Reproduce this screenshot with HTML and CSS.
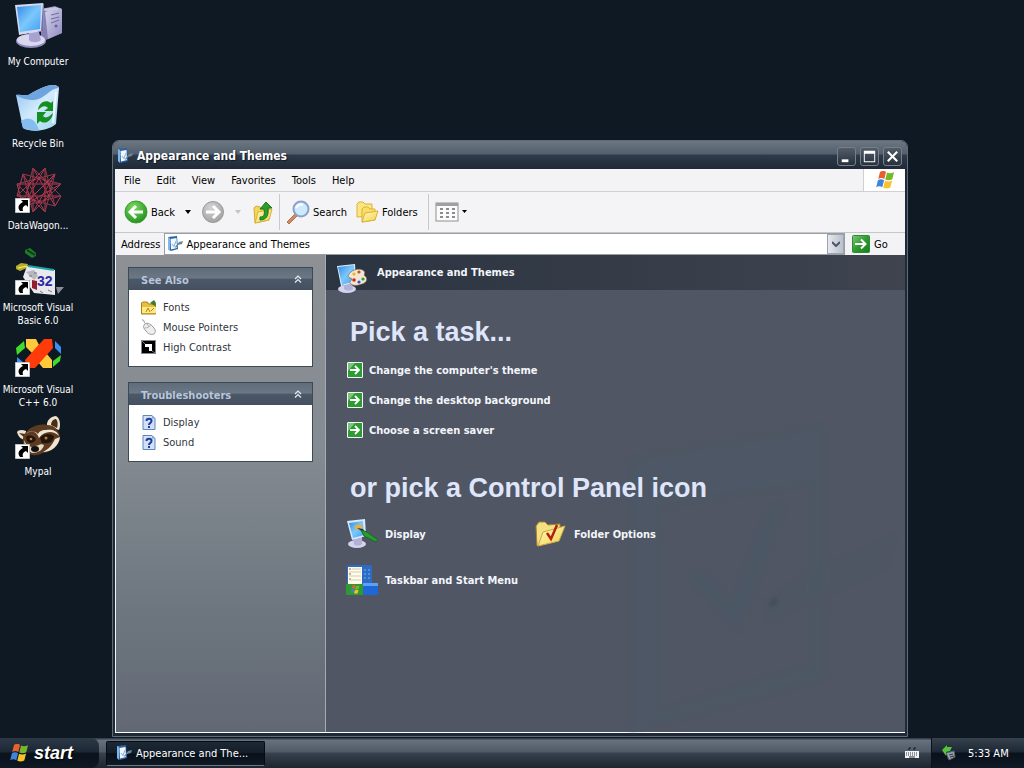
FILE: index.html
```html
<!DOCTYPE html>
<html lang="en">
<head>
    <meta charset="UTF-8">
    <meta name="viewport" content="width=device-width, initial-scale=1.0">
    <title>Appearance and Themes</title>
    <link rel="stylesheet" href="styles.css">
</head>
<body>
    <!-- Shared icons -->
    <svg class="defs" aria-hidden="true">
        <defs>
            <linearGradient id="gScreen" x1="0" y1="0" x2="1" y2="1">
                <stop offset="0" stop-color="#3288e6"/>
                <stop offset="0.5" stop-color="#7cc8fb"/>
                <stop offset="1" stop-color="#3f9ff5"/>
            </linearGradient>
            <linearGradient id="gCase" x1="0" y1="0" x2="1" y2="1">
                <stop offset="0" stop-color="#d6d3ec"/>
                <stop offset="1" stop-color="#8f8bbf"/>
            </linearGradient>
            <linearGradient id="gBin" x1="0" y1="0" x2="1" y2="1">
                <stop offset="0" stop-color="#8fc0f2"/>
                <stop offset="0.5" stop-color="#d3ebfc"/>
                <stop offset="1" stop-color="#9fd6ee"/>
            </linearGradient>
            <linearGradient id="gGreen" x1="0" y1="0" x2="1" y2="1">
                <stop offset="0" stop-color="#7cc877"/>
                <stop offset="0.5" stop-color="#2f9a30"/>
                <stop offset="1" stop-color="#15801a"/>
            </linearGradient>
            <linearGradient id="gFolder" x1="0" y1="0" x2="1" y2="1">
                <stop offset="0" stop-color="#fffbb4"/>
                <stop offset="1" stop-color="#f3d050"/>
            </linearGradient>
            <radialGradient id="gBall" cx="0.4" cy="0.3" r="0.75">
                <stop offset="0" stop-color="#7ddb60"/>
                <stop offset="1" stop-color="#1f8f1b"/>
            </radialGradient>
            <radialGradient id="gBallOff" cx="0.4" cy="0.3" r="0.75">
                <stop offset="0" stop-color="#d4d4d4"/>
                <stop offset="1" stop-color="#a0a0a0"/>
            </radialGradient>
        </defs>
        <symbol id="shortcut" viewBox="0 0 15 15">
            <rect width="15" height="15" fill="#fff" stroke="#8a8a8a"/>
            <path d="M6 2h7v7l-2-2c-3 1-4 3-3 6H5C2 9 4 6 8 4z" fill="#000"/>
        </symbol>
        <symbol id="flag" viewBox="0 0 20 18">
            <path d="M5 1c2-1.500 4.500-1.500 6 0L9.300 8c-2-1.200-4-1.200-6.100 0z" fill="#e8602c"/>
            <path d="M12 1.500c2 1 4 1 7-.3L17.300 8.200c-2.500 1.200-4.700 1.200-7 .3z" fill="#76b82a"/>
            <path d="M2.900 9.200c2-1.200 4-1.200 6.200 0l-1.800 7c-2-1.300-4-1.300-6.100 0z" fill="#3f83dc"/>
            <path d="M10 9.700c2.300 1 4.700 1 7.100-.2l-1.800 7c-2.400 1.200-4.700 1.200-7 .2z" fill="#f8c22a"/>
        </symbol>
        <symbol id="theme" viewBox="0 0 16 16">
            <path d="M1 1l9-1 1 13-7 2-3-2z" fill="#2a62a4"/>
            <path d="M1 1l2 1V15l-2-2z" fill="#7db8ec"/>
            <path d="M3.500 3l6-1 .5 10-6 1.500z" fill="#f5f9ff"/>
            <path d="M5 8l2 2.500L9 5" fill="none" stroke="#8fbde8" stroke-width="1.200"/>
            <path d="M8 11l4-5 4-1-1 3-4 1-2 3z" fill="#64879c"/>
        </symbol>
        <symbol id="go" viewBox="0 0 18 18">
            <rect x="0.500" y="0.500" width="17" height="17" rx="1" fill="url(#gGreen)" stroke="#2d8a36"/>
            <path d="M3 9h10M9 4.500L13.500 9 9 13.500" fill="none" stroke="#fff" stroke-width="2"/>
        </symbol>
        <symbol id="task" viewBox="0 0 16 16">
            <rect x="0.500" y="0.500" width="15" height="15" rx="0.500" fill="#2d9a34" stroke="#f4fff4"/>
            <path d="M1 1h7L1 9z" fill="#7cc57c"/>
            <path d="M3 8h9M8 4l4 4-4 4" fill="none" stroke="#fff" stroke-width="1.800"/>
        </symbol>
        <symbol id="chevrons" viewBox="0 0 8 8">
            <path d="M1 4l3-3 3 3M1 7.500l3-3 3 3" fill="none" stroke="#e4ebf5" stroke-width="1.200"/>
        </symbol>
        <symbol id="help" viewBox="0 0 14 16">
            <path d="M1 1.500h9l3 3v11H1z" fill="#cfe0f8" stroke="#5f86bd"/>
            <path d="M10 1.500v3h3z" fill="#7fa4d6"/>
            <path d="M4.500 7c0-3 5-3 5 0 0 2-2.500 2-2.500 4M7 12v2" fill="none" stroke="#1c3f9c" stroke-width="2"/>
        </symbol>
    </svg>

    <main class="desktop">
        <nav class="shortcuts">
            <a class="shortcut" href="#">
                <svg class="shortcut-icon" viewBox="0 0 48 48">
                    <path d="M27 7l14-3 7 3v24l-16 7-5-4z" fill="#8480b4"/>
                    <path d="M27 7l14-2 7 2-14 3z" fill="#c9c6e4"/>
                    <path d="M31 10l17-3v24l-14 6z" fill="url(#gCase)"/>
                    <path d="M37 13l8-2M37 17l8-2M37 21l8-3" stroke="#6f6ba5"/>
                    <circle cx="42" cy="24" r="1.500" fill="#6662a0"/>
                    <ellipse cx="17" cy="39" rx="15" ry="7" fill="#8e8abc"/>
                    <ellipse cx="17" cy="38" rx="14" ry="6" fill="#dad8ef"/>
                    <path d="M15 30h10l2 8c-3 3-10 3-12 0z" fill="#a7a3d0"/>
                    <path d="M1 3l28-2 1 3-1 25-24 4z" fill="#d4d8f0"/>
                    <path d="M29 1l1 2-1 26-2 0z" fill="#6f74a4"/>
                    <path d="M3 5l24-2-1 24-20 3z" fill="url(#gScreen)"/>
                </svg>
                <span>My Computer</span>
            </a>
            <a class="shortcut" href="#">
                <svg class="shortcut-icon" viewBox="0 0 48 48">
                    <path d="M2 11c5-1 10 2 14-1C22 6 33 1 39 1c4 0 6 2 6 3l-3 36c-8 7-25 9-33 4z" fill="url(#gBin)"/>
                    <path d="M2 11c5-1 10 2 14-1C22 6 33 1 39 1c3 0 5 1 6 3-9 0-14 11-25 12-7 0-14-2-18-5z" fill="#6ea5de"/>
                    <path d="M7 37c7-5 14-3 18 9-6 1-12 0-16-2z" fill="#86bdf0"/>
                    <path d="M42 8l-3 31" stroke="#ecfaff" stroke-width="2"/>
                    <path d="M24 26c1-8 8-11 13-7l2-2v10H30l4-3c-3-3-6-2-10 2z" fill="#159020"/>
                    <path d="M39 29c-1 8-8 12-13 8l-3 3V28h9l-3 4c3 3 6 1 10-3z" fill="#159020"/>
                </svg>
                <span>Recycle Bin</span>
            </a>
            <a class="shortcut" href="#">
                <svg class="shortcut-icon" viewBox="0 0 48 48">
                    <g fill="none" stroke="#b83c50" transform="translate(25 24)">
                        <path d="M22 6L-22 6-16 -16 6 22 6-22-16 16-22-6 22-6-16 16 16-16-6 22-6-22 16 16z"/>
                        <path d="M22 6L-16 16-6-22zM16 16L-22 6 6-22zM6 22L-22-6 16-16zM-6 22L-16-16 22-6z" stroke="#96364a"/>
                        <circle r="11" stroke-dasharray="3 2"/>
                        <circle r="7" stroke="#7d2335"/>
                    </g>
                    <use href="#shortcut" x="1" y="32" width="15" height="15"/>
                </svg>
                <span>DataWagon...</span>
            </a>
            <a class="shortcut" href="#">
                <svg class="shortcut-icon" viewBox="0 0 48 48">
                    <path d="M11 2l5-2 6 5v3l-4 2-7-5z" fill="#1f7a2d"/>
                    <path d="M13 2l8 5" stroke="#0c3d14" stroke-width="2"/>
                    <path d="M2 18l5-3 7 1-1 4-7 3-4-2z" fill="#b5ad2a"/>
                    <path d="M4 20l9-2" stroke="#fff27a"/>
                    <path d="M13 18l28 4v25l-21-2-11-16z" fill="#e8e8ee"/>
                    <path d="M14 18l26 4" stroke="#16a6a6" stroke-width="2"/>
                    <path d="M12 24l8-2 4 6-4 4z" fill="#b7b7bf"/>
                    <path d="M18 32l5 1v9l-5-2z" fill="#951d2c"/>
                    <path d="M26 43l3 2M34 42l4 2M20 25h3M15 28h3" stroke="#777"/>
                    <text class="badge-32" x="23" y="38">32</text>
                    <path d="M42 39h8l-6 7z" fill="#8b8f96"/>
                    <use href="#shortcut" x="1" y="32" width="15" height="15"/>
                </svg>
                <span>Microsoft Visual<br>Basic 6.0</span>
            </a>
            <a class="shortcut" href="#">
                <svg class="shortcut-icon" viewBox="0 0 48 48">
                    <path d="M10 11l1 7-8 7-1-7z" fill="#3fdc2c"/>
                    <path d="M3 27l7 6v4l-7-5z" fill="#3c8ff0"/>
                    <path d="M12 9h10l3 6-7 8-6-6z" fill="#ffc93c"/>
                    <path d="M32 23l6 7v8h-9l-5-6z" fill="#ffc93c"/>
                    <path d="M41 11l6 6v7l-6-6z" fill="#3c8ff0"/>
                    <path d="M47 25l-1 6-7 6v-6z" fill="#3fdc2c"/>
                    <path d="M30 9h8l1 9-18 20h-8l-2-8z" fill="#ff3b0a"/>
                    <use href="#shortcut" x="1" y="32" width="15" height="15"/>
                </svg>
                <span>Microsoft Visual<br>C++ 6.0</span>
            </a>
            <a class="shortcut" href="#">
                <svg class="shortcut-icon" viewBox="0 0 48 48">
                    <path d="M33 14c-1-6 5-10 9-10 4 2 5 9 3 14z" fill="#ece2cf"/>
                    <path d="M37 13c0-4 3-6 5-6 2 2 2 6 1 9z" fill="#4a2c17"/>
                    <path d="M12 19c-4-2-8-1-9 1 1 5 5 8 9 8z" fill="#ece2cf"/>
                    <path d="M5 21l6 1v4z" fill="#4a2c17"/>
                    <path d="M9 26c2-9 14-15 24-13 8 0 13 6 13 13-1 8-9 14-17 15-6 3-12 3-14 0-4-4-7-9-6-15z" fill="#5d3b20"/>
                    <path d="M12 22c6-5 11-2 13 4 5-7 14-8 20-2-2-6-8-7-13-6-5 0-7 2-8 4-3-3-8-4-12 0z" fill="#efe6d6"/>
                    <path d="M46 25c-1 9-9 15-17 15 6-3 9-7 12-13z" fill="#efe6d6"/>
                    <path d="M10 28c2 4 3 6 8 7 8-2 9-4 12-2-1 5-6 8-12 8-4-2-8-7-8-13z" fill="#e6dac6"/>
                    <path d="M26 26c4-5 10-5 14-2-1 7-6 8-12 7z" fill="#24150b"/>
                    <path d="M12 25c4-3 8-1 10 2-2 5-7 5-9 2z" fill="#24150b"/>
                    <circle cx="32" cy="26" r="1.500" fill="#b2824d"/>
                    <circle cx="17" cy="27" r="1.300" fill="#b2824d"/>
                    <ellipse cx="21" cy="37" rx="4" ry="3" fill="#111"/>
                    <use href="#shortcut" x="1" y="32" width="15" height="15"/>
                </svg>
                <span>Mypal</span>
            </a>
        </nav>

        <section class="window">
            <header class="titlebar">
                <svg class="icon-16" viewBox="0 0 16 16"><use href="#theme"/></svg>
                <h1>Appearance and Themes</h1>
                <div class="controls">
                    <button type="button" aria-label="Minimize">
                        <svg viewBox="0 0 18 18"><path d="M4 12h7v3H4z" fill="#fff"/></svg>
                    </button>
                    <button type="button" aria-label="Maximize">
                        <svg viewBox="0 0 18 18"><path d="M3 3h12v12H3zM4 6v8h10V6z" fill="#fff" fill-rule="evenodd"/></svg>
                    </button>
                    <button type="button" aria-label="Close">
                        <svg viewBox="0 0 18 18"><path d="M4 4l10 10M14 4L4 14" stroke="#fff" stroke-width="2.200"/></svg>
                    </button>
                </div>
            </header>

            <div class="menubar">
                <button type="button">File</button>
                <button type="button">Edit</button>
                <button type="button">View</button>
                <button type="button">Favorites</button>
                <button type="button">Tools</button>
                <button type="button">Help</button>
                <div class="brand"><svg viewBox="0 0 20 18"><use href="#flag"/></svg></div>
            </div>

            <div class="toolbar">
                <div class="group">
                    <button type="button" class="tool">
                        <svg class="icon-24" viewBox="0 0 24 24">
                            <circle cx="12" cy="12" r="11" fill="url(#gBall)" stroke="#3d9a35"/>
                            <path d="M19 12H7M12 6l-6 6 6 6" fill="none" stroke="#fff" stroke-width="3"/>
                        </svg>
                        Back
                    </button>
                    <button type="button" class="drop" aria-label="Back history">
                        <svg viewBox="0 0 6 4"><path d="M0 0h6L3 4z" fill="#000"/></svg>
                    </button>
                    <button type="button" class="tool" aria-label="Forward">
                        <svg class="icon-24" viewBox="0 0 24 24">
                            <circle cx="12" cy="12" r="10.500" fill="url(#gBallOff)" stroke="#9a9a9a"/>
                            <path d="M5 12h12M12 6l6 6-6 6" fill="none" stroke="#fff" stroke-width="3"/>
                        </svg>
                    </button>
                    <button type="button" class="drop" aria-label="Forward history">
                        <svg viewBox="0 0 6 4"><path d="M0 0h6L3 4z" fill="#c4c4c4"/></svg>
                    </button>
                    <button type="button" class="tool" aria-label="Up">
                        <svg class="icon-24" viewBox="0 0 24 24">
                            <path d="M3 8l2-2 4 1 1 2 8-1v12L4 23z" fill="#f3d75c" stroke="#d3aa35"/>
                            <path d="M4 23l3-11 14-3-3 11z" fill="url(#gFolder)" stroke="#d8b23c"/>
                            <path d="M9 17c4 0 5-2 4-8H9l6-7 6 6h-4c1 8-2 12-8 12z" fill="#2c9c2a" stroke="#1b761c"/>
                        </svg>
                    </button>
                </div>
                <div class="group labelled">
                    <button type="button" class="tool">
                        <svg class="icon-24" viewBox="0 0 24 24">
                            <path d="M1 22l8-8 2 2-8 8z" fill="#d08a60" stroke="#b5744f"/>
                            <circle cx="15" cy="9" r="7.500" fill="#cdeaff" stroke="#8aa2cc" stroke-width="2"/>
                            <path d="M10 8c1-3 4-4 7-3" fill="none" stroke="#fff" stroke-width="2"/>
                        </svg>
                        Search
                    </button>
                    <button type="button" class="tool">
                        <svg class="icon-24" viewBox="0 0 24 24">
                            <path d="M2 17V4l2-2h4l2 2h7v12z" fill="#fbe680" stroke="#dcb13a"/>
                            <path d="M7 22V9l2-2h4l2 2h5v11z" fill="#f9de68" stroke="#dcb13a"/>
                            <path d="M7 22l3-9 13-2-3 9z" fill="url(#gFolder)" stroke="#dcb13a"/>
                        </svg>
                        Folders
                    </button>
                </div>
                <div class="group">
                    <button type="button" class="tool" aria-label="Views">
                        <svg class="icon-24" viewBox="0 0 24 24">
                            <rect x="1" y="3" width="22" height="18" fill="#fbfbfb" stroke="#8f8f8f"/>
                            <path d="M1 4.500h22" stroke="#a0a0a0" stroke-width="3"/>
                            <path d="M5 9h3M11 9h3M17 9h3M5 13h3M11 13h3M17 13h3M5 17h3M11 17h3M17 17h3" stroke="#8c8c8c" stroke-width="2"/>
                        </svg>
                        <svg class="caret" viewBox="0 0 6 4"><path d="M0 0h5L2.500 3z" fill="#000"/></svg>
                    </button>
                </div>
            </div>

            <div class="addressbar">
                <label for="address">Address</label>
                <div class="field">
                    <svg class="icon-16" viewBox="0 0 16 16"><use href="#theme"/></svg>
                    <input type="text" id="address" value="Appearance and Themes">
                    <button type="button" aria-label="Show addresses">
                        <svg viewBox="0 0 8 6"><path d="M0 1l4 4 4-4" fill="none" stroke="#4a5568" stroke-width="2"/></svg>
                    </button>
                </div>
                <button type="button" class="go">
                    <svg viewBox="0 0 18 18"><use href="#go"/></svg>
                    Go
                </button>
            </div>

            <div class="content">
                <aside class="sidebar">
                    <section class="panel">
                        <h2>See Also <svg viewBox="0 0 8 8"><use href="#chevrons"/></svg></h2>
                        <ul>
                            <li><a href="#">
                                <svg class="icon-16" viewBox="0 0 16 16">
                                    <path d="M.5 15V4l1-1h5l1 2h7v10z" fill="#e7bf3a" stroke="#a7801c"/>
                                    <path d="M1 14V8h14v6z" fill="#fbe98a"/>
                                    <path d="M5 13l2-4 2 4M10 12l3-3" stroke="#b38415" fill="none"/>
                                    <path d="M9 4l4-3 2 3-1 3z" fill="#3d7a32"/>
                                </svg>
                                Fonts
                            </a></li>
                            <li><a href="#">
                                <svg class="icon-16" viewBox="0 0 16 16">
                                    <path d="M1 1c3-1 1 4 5 4" fill="none" stroke="#8c8c8c"/>
                                    <path d="M3 6c2-3 6-2 9 2 3 3 3 5 1 7-3 1-6 0-8-3-2-2-3-4-2-6z" fill="#efeeee" stroke="#9b9898"/>
                                    <path d="M4 9c2 0 5-1 6-4M6 5l2 3" fill="none" stroke="#b1aeae"/>
                                </svg>
                                Mouse Pointers
                            </a></li>
                            <li><a href="#">
                                <svg class="icon-16" viewBox="0 0 16 16">
                                    <rect x="0.500" y="1.500" width="14" height="13" fill="#000" stroke="#8a8a8a"/>
                                    <path d="M4 5h7v7H8V8H4z" fill="#fff"/>
                                    <path d="M1 2l3 3M11 12l3 2" stroke="#777"/>
                                </svg>
                                High Contrast
                            </a></li>
                        </ul>
                    </section>
                    <section class="panel">
                        <h2>Troubleshooters <svg viewBox="0 0 8 8"><use href="#chevrons"/></svg></h2>
                        <ul>
                            <li><a href="#"><svg class="icon-16" viewBox="0 0 14 16"><use href="#help"/></svg>Display</a></li>
                            <li><a href="#"><svg class="icon-16" viewBox="0 0 14 16"><use href="#help"/></svg>Sound</a></li>
                        </ul>
                    </section>
                </aside>

                <article class="category">
                    <div class="category-head">
                        <svg viewBox="0 0 32 32">
                            <ellipse cx="11" cy="27" rx="9" ry="4" fill="#d5d3ee"/>
                            <path d="M8 20h8l1 7c-2 2-7 2-9 0z" fill="#b3b1d8"/>
                            <path d="M1 4l18-2 1 18-15 4z" fill="#dff0ff"/>
                            <path d="M2 5l16-2 1 16-13 4z" fill="url(#gScreen)"/>
                            <path d="M12 14c2-6 12-9 16-5 2 2-1 4 1 5 3 2 2 7-3 8-5 2-10 2-12-1-1-2 2-2 2-4 0-1-4-1-4-3z" fill="#f2e6d2" stroke="#7b5a37" stroke-width="0.600"/>
                            <circle cx="18" cy="12" r="1.600" fill="#e6b52c"/>
                            <circle cx="23" cy="10" r="1.600" fill="#b8552a"/>
                            <circle cx="18" cy="18" r="1.800" fill="#cc2a22"/>
                            <circle cx="23" cy="20" r="1.600" fill="#2c55c4"/>
                            <circle cx="27" cy="17" r="1.600" fill="#2f9a40"/>
                        </svg>
                        Appearance and Themes
                    </div>
                    <!-- faint category artwork in the lower right corner -->
                    <svg class="watermark" viewBox="0 0 280 310">
                        <g fill="#4b5865">
                            <path d="M5 37L200 4v166l-15 6V62L36 84v204l149-44v-58l16-4v74L5 310z" opacity="0.700"/>
                            <path d="M62 154l20-5 24 34 38-98 16-4-46 128z" opacity="0.800"/>
                            <path d="M140 180l40-26 90-40-10 32-80 34-36 20z" opacity="0.400"/>
                        </g>
                        <path d="M142 186l8-12 3 8z" fill="#3f4b5a"/>
                    </svg>
                    <div class="category-body">
                        <h2>Pick a task...</h2>
                        <ul class="tasks">
                            <li><a href="#"><svg class="icon-16" viewBox="0 0 16 16"><use href="#task"/></svg>Change the computer's theme</a></li>
                            <li><a href="#"><svg class="icon-16" viewBox="0 0 16 16"><use href="#task"/></svg>Change the desktop background</a></li>
                            <li><a href="#"><svg class="icon-16" viewBox="0 0 16 16"><use href="#task"/></svg>Choose a screen saver</a></li>
                        </ul>
                        <h2>or pick a Control Panel icon</h2>
                        <ul class="applets">
                            <li><a href="#">
                                <svg viewBox="0 0 32 32">
                                    <ellipse cx="11" cy="26" rx="9" ry="4" fill="#d5d3ee"/>
                                    <path d="M7 18h9v8c-2 2-7 2-8 0z" fill="#b3b1d8"/>
                                    <path d="M1 3l18-2 1 17-14 4z" fill="#d9ecff"/>
                                    <path d="M3 5l14-2 1 14-11 3z" fill="url(#gScreen)"/>
                                    <path d="M8 8l7-2 2 4-7 2z" fill="#e0b24c"/>
                                    <path d="M11 10l6 1 3 5z" fill="#3b2d1a"/>
                                    <path d="M15 12l6 2 11 8-2 2-12-6z" fill="#2a9a32" stroke="#166b20"/>
                                </svg>
                                Display
                            </a></li>
                            <li><a href="#">
                                <svg viewBox="0 0 32 32">
                                    <path d="M2 28L1 8l3-4h6l3 3 12-1v6L20 24z" fill="#f6e084" stroke="#a8842a"/>
                                    <path d="M3 28l5-14 22-6-6 15z" fill="url(#gFolder)" stroke="#c9a744"/>
                                    <path d="M12 15l4 6 6-14" fill="none" stroke="#b21f16" stroke-width="2.500"/>
                                </svg>
                                Folder Options
                            </a></li>
                            <li><a href="#">
                                <svg viewBox="0 0 32 32">
                                    <rect x="1" y="1" width="25" height="20" rx="2" fill="#2b6cc4"/>
                                    <path d="M2 3h14v17H2z" fill="#fcfbef"/>
                                    <path d="M4 4v2M4 9v2M4 14v2" stroke="#8a6a3a"/>
                                    <path d="M6 5h9M3 8h12M3 12h12M3 16h12" stroke="#d5cfa4"/>
                                    <path d="M18 6h2M22 6h2M18 10h2M22 10h2M18 14h2M22 14h2" stroke="#7fb4f0"/>
                                    <path d="M0 20h17l1 11H0z" fill="#2c9a30"/>
                                    <path d="M17 19h15v12H17z" fill="#1f66d6"/>
                                    <path d="M17 19h15v3H17z" fill="#5da0f5"/>
                                    <use href="#flag" x="4" y="21" width="10" height="9"/>
                                </svg>
                                Taskbar and Start Menu
                            </a></li>
                        </ul>
                    </div>
                </article>
            </div>
        </section>
    </main>

    <footer class="taskbar">
        <button type="button" class="start">
            <svg viewBox="0 0 20 18"><use href="#flag"/></svg>
            start
        </button>
        <button type="button" class="task-button">
            <svg class="icon-16" viewBox="0 0 16 16"><use href="#theme"/></svg>
            Appearance and The...
        </button>
        <svg class="keyboard" viewBox="0 0 14 12">
            <path d="M3 2h2V0M8 2h2V0" stroke="#10161e" fill="none"/>
            <rect y="4" width="14" height="7" fill="#f2f4f6"/>
            <path d="M1 6h12M1 8h12" stroke="#2b333d" stroke-dasharray="1 1"/>
            <path d="M4 10h6" stroke="#2b333d"/>
        </svg>
        <div class="tray">
            <svg class="icon-16" viewBox="0 0 16 16">
                <path d="M5 8l8-2 1 6-6 3z" fill="#9aa1a9" stroke="#59616b"/>
                <path d="M8 10l4-1M9 12l4-1" stroke="#2e353d"/>
                <path d="M1 5l5-5v2h5l-2 4-4 1v4z" fill="#55c13f"/>
            </svg>
            <time>5:33 AM</time>
        </div>
    </footer>
</body>
</html>
```
FILE: styles.css
```css
* {
    box-sizing: border-box;
}

body {
    margin: 0;
    height: 100vh;
    display: flex;
    flex-direction: column;
    overflow: hidden;
    background-color: #0f1924;
    font-family: "DejaVu Sans Condensed", Tahoma, sans-serif;
    font-size: 11px;
    line-height: 13px;
    color: #000;
}

h1, h2, ul {
    margin: 0;
    padding: 0;
}

ul {
    list-style: none;
}

a {
    color: inherit;
    text-decoration: none;
}

button {
    margin: 0;
    padding: 0;
    border: none;
    background: none;
    font: inherit;
    color: inherit;
    cursor: pointer;
}

svg {
    flex: none;
    display: block;
}

.defs {
    position: absolute;
    width: 0;
    height: 0;
}

.icon-16 {
    width: 16px;
    height: 16px;
}

.icon-24 {
    width: 24px;
    height: 24px;
}

/* Desktop */
.desktop {
    flex: 1;
    position: relative;
    min-height: 0;
}

.shortcuts {
    display: flex;
    flex-direction: column;
    width: 76px;
    padding-top: 2px;
}

.shortcut {
    display: flex;
    flex-direction: column;
    align-items: center;
    gap: 5px;
    height: 82px;
    font-size: 10px;
    color: #fff;
    text-align: center;
    white-space: nowrap;
}

.shortcut-icon {
    width: 48px;
    height: 48px;
    overflow: visible;
}

.badge-32 {
    font: bold 14px "Liberation Sans", sans-serif;
    fill: #2b2ba0;
}

/* Window */
.window {
    position: absolute;
    top: 140px;
    left: 112px;
    right: 116px;
    bottom: 1px;
    display: flex;
    flex-direction: column;
    padding: 0 2px 3px;
    border: 1px solid #606b78;
    border-radius: 7px 7px 0 0;
    background-color: #1f2a38;
}

.titlebar {
    display: flex;
    align-items: center;
    gap: 4px;
    height: 28px;
    margin: 0 -2px;
    padding: 2px 5px 0 4px;
    border-radius: 6px 6px 0 0;
    background: linear-gradient(#6b7682, #54606d 45%, #2e3a49 52%, #1f2937);
    color: #fff;
}

.titlebar h1 {
    flex: 1;
    font-size: 12px;
    line-height: 18px;
    text-shadow: 1px 1px 1px #111a26;
}

.controls {
    display: flex;
    gap: 4px;
}

.controls button {
    width: 19px;
    height: 19px;
    border: 1px solid #75808c;
    border-radius: 3px;
    background: linear-gradient(#525d69, #27313d);
}

.controls svg {
    width: 17px;
    height: 17px;
}

.menubar {
    display: flex;
    height: 23px;
    border-bottom: 1px solid #cfd0d2;
    background-color: #f3f3f5;
}

.menubar button {
    padding: 0 8px;
}

.menubar button:first-child {
    padding-left: 9px;
}

.brand {
    display: flex;
    align-items: center;
    justify-content: center;
    width: 42px;
    margin-left: auto;
    border-left: 1px solid #cfd0d2;
    background-color: #fff;
}

.brand svg {
    width: 20px;
    height: 18px;
}

.toolbar {
    display: flex;
    align-items: center;
    height: 41px;
    padding-left: 5px;
    border-bottom: 1px solid #c6c7ca;
    background-color: #f4f4f6;
}

.group {
    display: flex;
    align-items: center;
    height: 36px;
}

.group + .group {
    padding-left: 2px;
    border-left: 1px solid #c9cacd;
}

.labelled {
    padding-right: 6px;
}

.tool {
    display: flex;
    align-items: center;
    gap: 3px;
    padding: 0 4px;
}

.drop {
    width: 18px;
    height: 24px;
    padding: 0 6px;
}

.drop svg, .caret {
    width: 6px;
    height: 4px;
}

.addressbar {
    display: flex;
    align-items: center;
    height: 22px;
    padding-left: 6px;
    background-color: #f3f3f5;
}

.field {
    flex: 1;
    display: flex;
    align-items: center;
    height: 22px;
    margin-left: 4px;
    padding-left: 2px;
    border: 1px solid #9a9da2;
    background-color: #fff;
}

.field input {
    flex: 1;
    min-width: 0;
    height: 18px;
    padding: 0 0 0 3px;
    border: none;
    outline: none;
    background: none;
    font: inherit;
    color: #000;
}

.field button {
    width: 17px;
    height: 20px;
    padding: 0 4px;
    border: 1px solid #9ba3af;
    background: linear-gradient(90deg, #e6e9ee, #b9c0ca);
}

.field button svg {
    width: 8px;
    height: 6px;
}

.go {
    display: flex;
    align-items: center;
    gap: 4px;
    width: 60px;
    padding-left: 7px;
}

.go svg {
    width: 18px;
    height: 18px;
}

.content {
    flex: 1;
    display: flex;
    min-height: 0;
    border-left: 1px solid #f2f4f6;
    border-bottom: 1px solid #fff;
}

/* Sidebar */
.sidebar {
    display: flex;
    flex-direction: column;
    gap: 15px;
    width: 210px;
    padding: 12px;
    border-right: 1px solid #a7abb1;
    background: linear-gradient(#8d9195, #848b92 40%, #6d767f 75%, #626874);
}

.panel {
    border: 1px solid #3e4956;
    background-color: #fff;
}

.panel h2 {
    display: flex;
    align-items: center;
    justify-content: space-between;
    height: 22px;
    padding: 2px 10px 0 12px;
    background: linear-gradient(#5f6c79, #6b7784 45%, #4b5868 52%, #45505f);
    font-size: 11px;
    color: #b9c6dc;
}

.panel h2 svg {
    width: 8px;
    height: 8px;
    margin-bottom: 3px;
}

.panel ul {
    padding: 7px 12px 9px;
}

.panel a {
    display: flex;
    align-items: center;
    gap: 6px;
    height: 20px;
    color: #2f353d;
}

/* Category page */
.category {
    flex: 1;
    position: relative;
    background-color: #505664;
}

.category-head {
    display: flex;
    align-items: center;
    gap: 9px;
    height: 35px;
    padding-left: 10px;
    background: linear-gradient(90deg, #2b3441, #3f444f);
    font-weight: bold;
    color: #f3f5fa;
}

.category-head svg {
    width: 32px;
    height: 32px;
    margin-top: 10px;
}

.watermark {
    position: absolute;
    right: 0;
    bottom: 0;
    width: 280px;
    height: 310px;
    filter: blur(2px);
}

.category-body {
    position: relative;
    padding: 27px 20px;
}

.category-body h2 {
    padding-left: 4px;
    font-family: "Liberation Sans", sans-serif;
    font-size: 27px;
    line-height: 30px;
    color: #dfe5fa;
}

.category-body a {
    display: flex;
    align-items: center;
    font-weight: bold;
    color: #f3f5fa;
}

.tasks {
    margin: 8px 0 28px;
    padding-left: 1px;
}

.tasks a {
    gap: 6px;
    height: 30px;
}

.applets {
    display: grid;
    grid-template-columns: 189px 1fr;
    grid-auto-rows: 46px;
    margin-top: 8px;
}

.applets a {
    gap: 7px;
    height: 46px;
}

.applets svg {
    width: 32px;
    height: 32px;
}

/* Taskbar */
.taskbar {
    display: flex;
    align-items: center;
    height: 30px;
    background: linear-gradient(#28323d, #66717d 8%, #505b67 45%, #36414d 52%, #1c2530);
    color: #fff;
}

.start {
    display: flex;
    align-items: center;
    gap: 5px;
    width: 99px;
    height: 30px;
    padding-left: 9px;
    border-radius: 0 8px 8px 0;
    background: linear-gradient(#2e3946, #1c2836 45%, #0a121c 52%, #0e1924);
    font-family: "Liberation Sans", sans-serif;
    font-size: 18px;
    font-style: italic;
    font-weight: bold;
    text-shadow: 1px 1px 1px #000;
}

.start svg {
    width: 20px;
    height: 18px;
}

.task-button {
    display: flex;
    align-items: center;
    gap: 4px;
    width: 159px;
    height: 25px;
    margin-left: 7px;
    padding-left: 9px;
    border: 1px solid #060c14;
    border-bottom-color: #6d7883;
    border-radius: 2px;
    background: linear-gradient(#1d2835, #141f2b 45%, #080f18 52%, #101b27);
}

.keyboard {
    width: 14px;
    height: 12px;
    margin-left: auto;
}

.tray {
    display: flex;
    align-items: center;
    gap: 11px;
    width: 93px;
    height: 30px;
    margin-left: 12px;
    padding-left: 9px;
    border-left: 1px solid #0a1119;
    background: linear-gradient(#36414d, #1d2936 45%, #09111b 52%, #0f1a26);
}
```
